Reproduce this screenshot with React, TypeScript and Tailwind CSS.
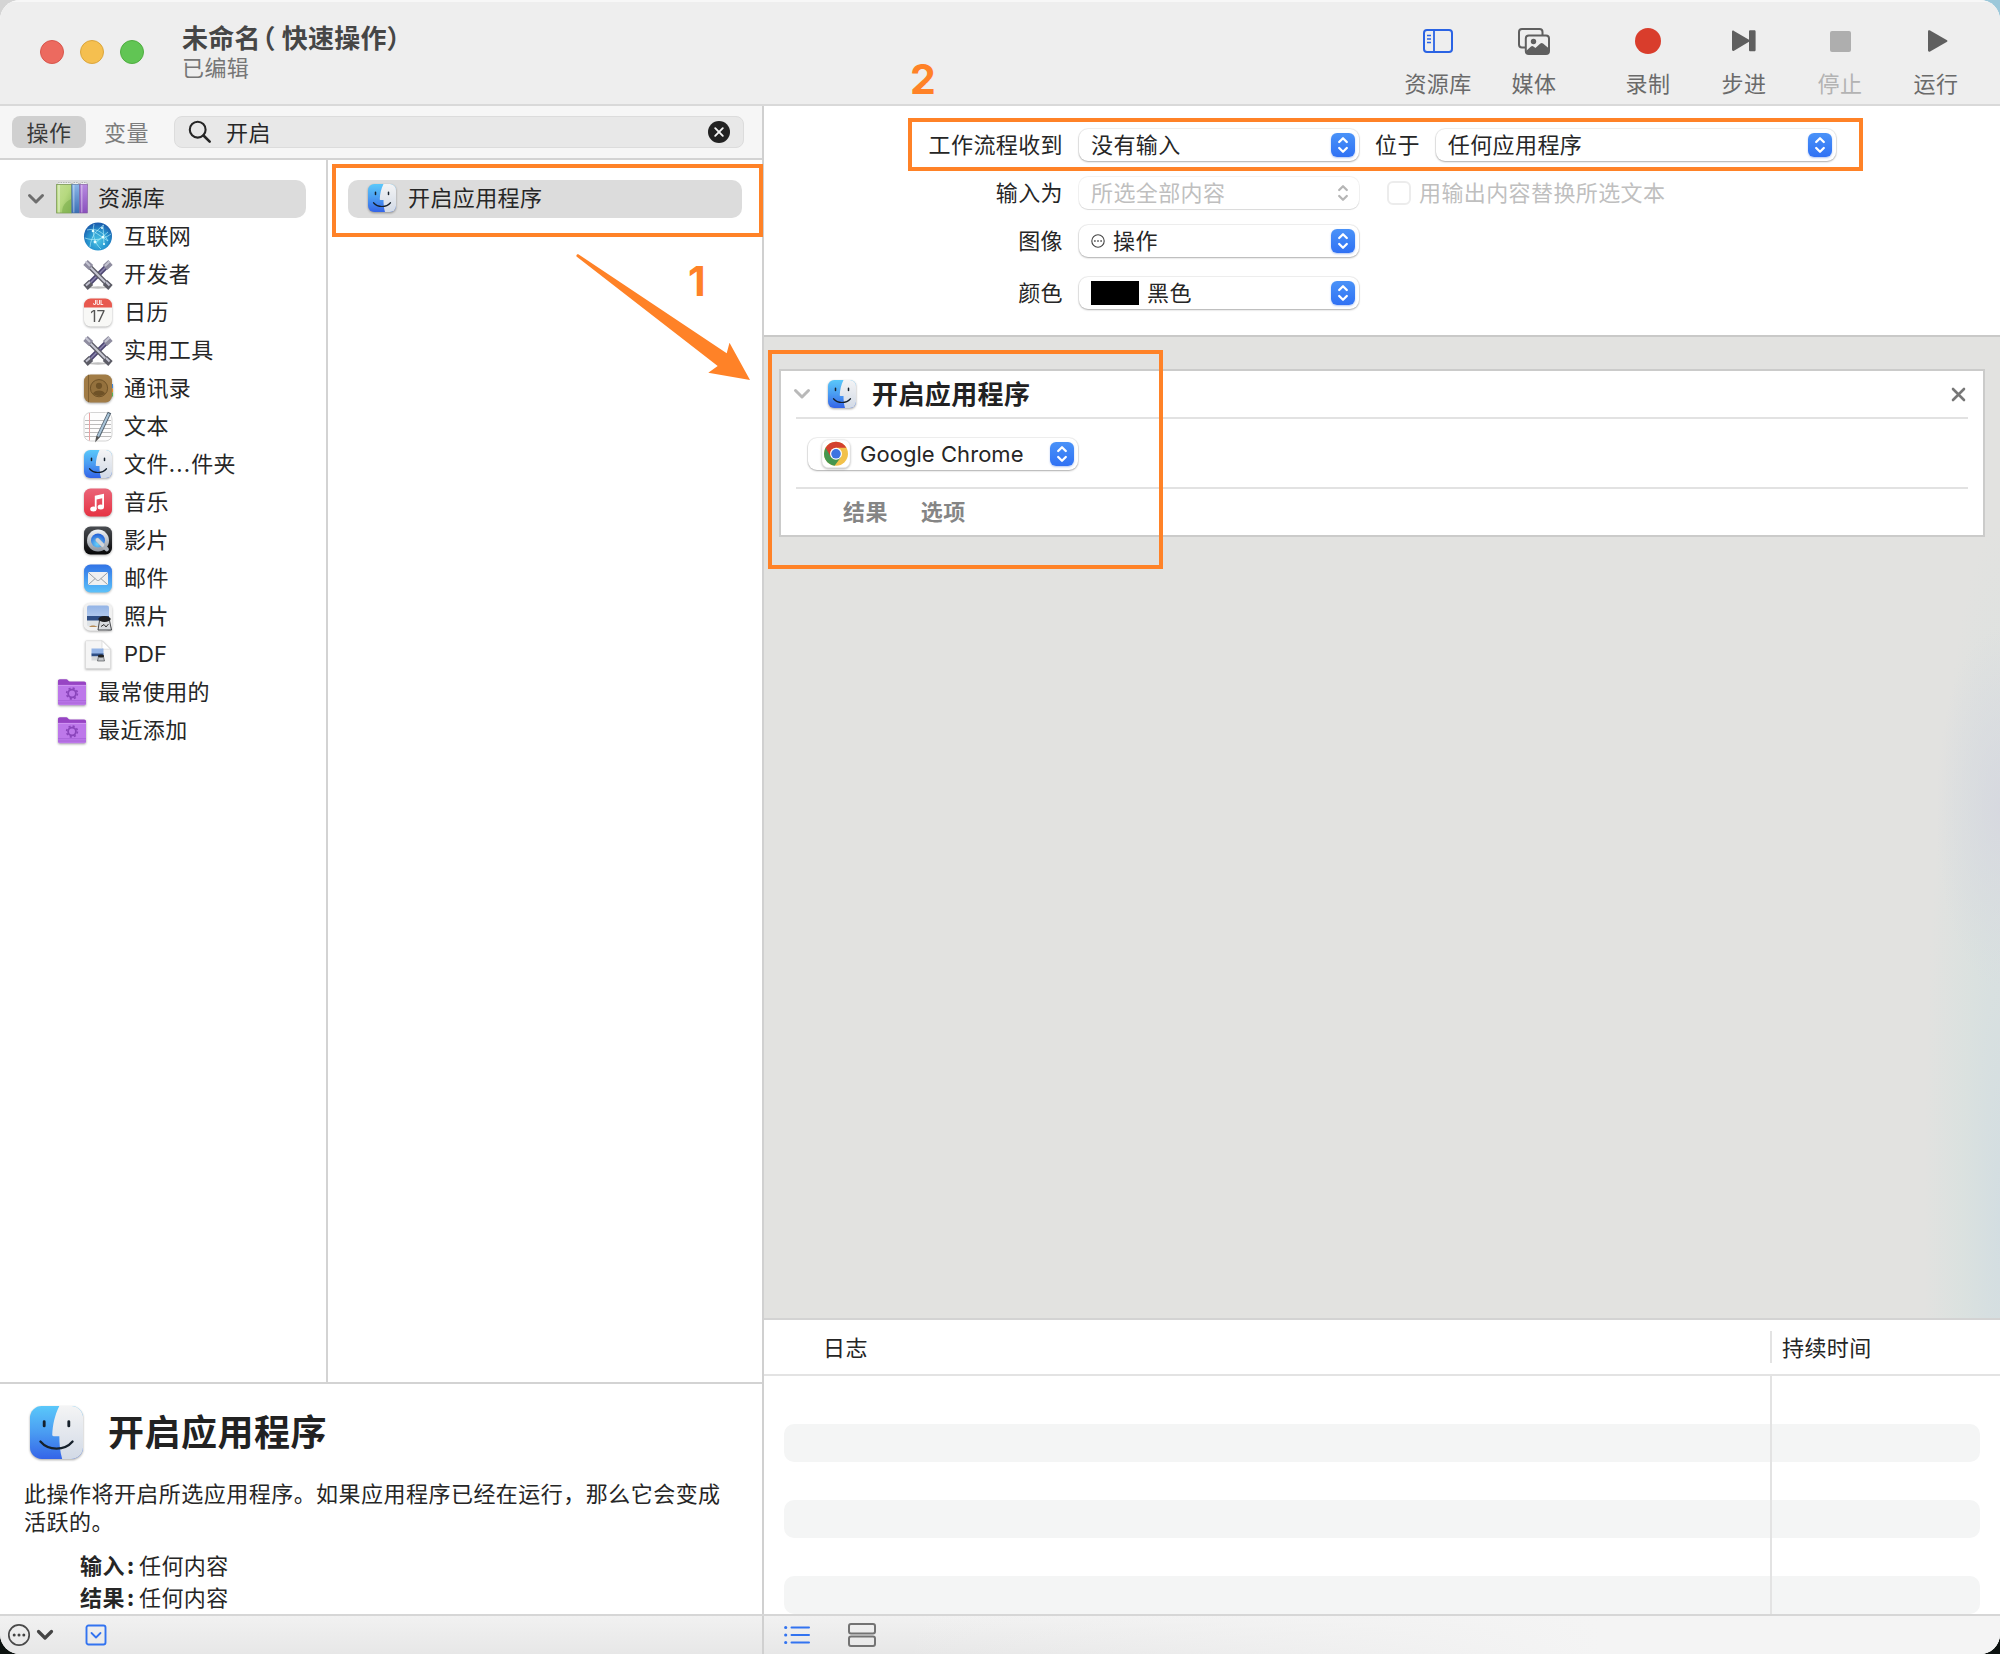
import React from "react";

const CJK = "font-['Noto_Sans_CJK_SC','Noto_Sans',sans-serif]";

/* ---------- app icons ---------- */

function Finder({ size, id }: { size: number; id: string }) {
  return (
    <svg width={size} height={size} viewBox="0 0 56 56" className="shrink-0 drop-shadow-[0_1px_1px_rgba(0,0,0,0.35)]">
      <defs>
        <linearGradient id={`${id}b`} x1="0" y1="0" x2="0" y2="1">
          <stop offset="0" stopColor="#5ac8fa" />
          <stop offset="0.5" stopColor="#4a9cf2" />
          <stop offset="1" stopColor="#3464e8" />
        </linearGradient>
        <linearGradient id={`${id}w`} x1="0" y1="0" x2="0" y2="1">
          <stop offset="0" stopColor="#f4f4f5" />
          <stop offset="1" stopColor="#d2dae6" />
        </linearGradient>
        <clipPath id={`${id}c`}>
          <rect width="56" height="56" rx="12.5" />
        </clipPath>
      </defs>
      <g clipPath={`url(#${id}c)`}>
        <rect width="56" height="56" fill={`url(#${id}b)`} />
        <path d="M31 0C26 10 24 20 23.5 30.5c0 1 .5 1.500 1.500 1.500h6c0 8 .7 16 3 24H56V0Z" fill={`url(#${id}w)`} />
      </g>
      <path d="M15 16.500v4.500M41 16.500v4.500" stroke="#15202b" strokeWidth="3" strokeLinecap="round" />
      <path d="M11 37.500c8.500 10 25.500 10 34 0" fill="none" stroke="#15202b" strokeWidth="2.400" strokeLinecap="round" />
    </svg>
  );
}

function Books() {
  return (
    <svg width="32" height="32" viewBox="0 0 32 32" className="shrink-0">
      <defs>
        <linearGradient id="bkg" x1="0" y1="0" x2="1" y2="1">
          <stop offset="0" stopColor="#c3df94" />
          <stop offset=".5" stopColor="#b6d97f" />
          <stop offset="1" stopColor="#86b559" />
        </linearGradient>
        <linearGradient id="bkb" x1="0" y1="0" x2="0" y2="1">
          <stop offset="0" stopColor="#8ab6e8" />
          <stop offset="1" stopColor="#3b6fb5" />
        </linearGradient>
        <linearGradient id="bkp" x1="0" y1="0" x2="0" y2="1">
          <stop offset="0" stopColor="#b78ae0" />
          <stop offset="1" stopColor="#8a50bd" />
        </linearGradient>
      </defs>
      <path d="M1 3 2.500.5h12L16 2.500 17.500.5H22L23.500 2.500 25 .5h5.500L32 3Z" fill="#eef0f0" stroke="#8a8f8a" strokeWidth=".6" strokeDasharray="1.500 1" />
      <rect x=".6" y="2.500" width="14.800" height="28.500" fill="url(#bkg)" stroke="#7d9a58" strokeWidth=".8" />
      <rect x="2" y="3" width="2" height="27.500" fill="#fff" opacity=".35" />
      <path d="M6 31c0-7 3-11 9-14v14Z" fill="#7fb04f" opacity=".6" />
      <rect x="15.800" y="2.500" width="7.600" height="28.500" fill="url(#bkb)" stroke="#4f719c" strokeWidth=".6" />
      <rect x="17" y="3" width="1.500" height="27.500" fill="#fff" opacity=".35" />
      <rect x="23.800" y="2.500" width="7.600" height="28.500" fill="url(#bkp)" stroke="#80559f" strokeWidth=".6" />
      <rect x="25" y="3" width="1.500" height="27.500" fill="#fff" opacity=".35" />
    </svg>
  );
}

function Globe() {
  return (
    <svg width="30" height="30" viewBox="0 0 30 30">
      <defs>
        <radialGradient id="glb" cx=".5" cy=".65" r=".6">
          <stop offset="0" stopColor="#4cc4e4" />
          <stop offset=".6" stopColor="#2795cf" />
          <stop offset="1" stopColor="#1b5fae" />
        </radialGradient>
      </defs>
      <circle cx="15" cy="14.500" r="14" fill="url(#glb)" />
      <g fill="none" stroke="#b9f3fb" strokeWidth=".9" opacity=".7">
        <path d="M4 8c8-2 16 1 21 11M11 2c-2 9 0 19 7 25M2 16c8 3 18 2 26-4M21 3c-8 5-13 12-14 22M10 9l15 10M12 21l13-11M20 3l1 20" />
      </g>
      <g fill="#e8ffff">
        <circle cx="10" cy="9" r="1.300" />
        <circle cx="20" cy="15" r="1.300" />
        <circle cx="12" cy="20" r="1.400" />
        <circle cx="19" cy="6" r="1" />
        <circle cx="21" cy="22" r="1.100" />
      </g>
    </svg>
  );
}

function Tools() {
  return (
    <svg width="30" height="30" viewBox="0 0 30 30">
      <ellipse cx="15" cy="27.500" rx="10" ry="1.200" fill="#000" opacity=".25" />
      <path d="M25 5 5 25" stroke="#4d4672" strokeWidth="4.600" />
      <path d="M25 5 5 25" stroke="#8c86ae" strokeWidth="1.600" />
      <path d="M5 5l20 20" stroke="#5d5d68" strokeWidth="4.600" />
      <path d="M5 5l20 20" stroke="#c9c9d4" strokeWidth="2" />
      <g strokeLinecap="butt">
        <path d="M2.500 2.500 8 7.500M27.500 2.500 22 7.500" stroke="#8f8da0" strokeWidth="6.500" />
        <path d="M2.500 27.500 8 22.500M27.500 27.500 22 22.500" stroke="#5c5c66" strokeWidth="6.500" />
        <path d="M2.500 1.500 7 6M26.500 1.500 22 6M3 25.500l4-3.500M26.500 25.500 23 22" stroke="#c4c4d2" strokeWidth="1.800" />
      </g>
    </svg>
  );
}

function Calendar() {
  return (
    <svg width="30" height="30" viewBox="0 0 30 30" className="drop-shadow-[0_1px_1px_rgba(0,0,0,0.3)]">
      <rect x="1" y=".5" width="28" height="28" rx="6.500" fill="#f8f8f6" />
      <path d="M1 9.500V7A6.500 6.500 0 0 1 7.500.5h15A6.500 6.500 0 0 1 29 7v2.500Z" fill="#e8594f" />
      <text x="15.300" y="7.400" fontSize="5.500" fontWeight="700" fill="#fff" textAnchor="middle" fontFamily="Inter, sans-serif" letterSpacing="0">
        JUL
      </text>
      <text x="14.800" y="23.500" fontSize="15.500" fill="#555" textAnchor="middle" fontFamily="Inter, sans-serif" letterSpacing="0">
        17
      </text>
    </svg>
  );
}

function Contacts() {
  return (
    <svg width="30" height="30" viewBox="0 0 30 30" className="drop-shadow-[0_1px_1px_rgba(0,0,0,0.35)]">
      <rect x="27" y="10" width="3" height="4.500" fill="#3f86d8" />
      <rect x="27" y="14.500" width="3" height="4" fill="#e98a2c" />
      <rect x="27" y="18.500" width="3" height="4" fill="#54b354" />
      <rect x="1" y=".5" width="28" height="28" rx="6.500" fill="#a17c46" />
      <path d="M5.500.8v27.400" stroke="#7f6033" strokeWidth="1" />
      <circle cx="16" cy="14.200" r="8.600" fill="#94713d" stroke="#6f5227" strokeWidth="1" />
      <circle cx="16" cy="11.800" r="3.100" fill="#6f5227" />
      <path d="M10 19.600c1.500-4 10.500-4 12 0-3 3.300-9 3.300-12 0Z" fill="#6f5227" />
    </svg>
  );
}

function TextEdit() {
  return (
    <svg width="30" height="32" viewBox="0 0 30 32">
      <rect x="1" y="1.500" width="28" height="28.500" rx="6.500" fill="#fdfdfd" stroke="#cfcfcf" strokeWidth=".9" />
      <path d="M2 9.500h26M2 13.500h26M2 17.500h26M2 21.500h26M2 25.500h26" stroke="#b4b4b4" strokeWidth=".9" />
      <path d="M6.500 2v27.500" stroke="#eba2a2" strokeWidth="1" />
      <path d="M26.500 1.500 15 26" stroke="#52616e" strokeWidth="3.800" />
      <path d="M26 2.500 15 25.500" stroke="#a9c4d8" strokeWidth="2" />
      <path d="m13.300 25 3.400 1.600-4.700 5Z" fill="#555" />
    </svg>
  );
}

function Music() {
  return (
    <svg width="30" height="30" viewBox="0 0 30 30" className="drop-shadow-[0_1px_1px_rgba(0,0,0,0.3)]">
      <defs>
        <linearGradient id="mus" x1="0" y1="0" x2="0" y2="1">
          <stop offset="0" stopColor="#ea6478" />
          <stop offset="1" stopColor="#e63343" />
        </linearGradient>
      </defs>
      <rect x="1" y=".5" width="28" height="28" rx="6.500" fill="url(#mus)" />
      <path d="M11.800 7.800 21 5.800v13.200h-1.800V10.200l-5.600 1.200v9.800h-1.800Z" fill="#fff" />
      <ellipse cx="10.400" cy="21.100" rx="3.200" ry="2.500" fill="#fff" />
      <ellipse cx="17.800" cy="19.100" rx="3.200" ry="2.500" fill="#fff" />
    </svg>
  );
}

function QuickTime() {
  return (
    <svg width="30" height="30" viewBox="0 0 30 30" className="drop-shadow-[0_1px_1px_rgba(0,0,0,0.3)]">
      <defs>
        <linearGradient id="qtb" x1="0" y1="0" x2="0" y2="1">
          <stop offset="0" stopColor="#4a4d52" />
          <stop offset="1" stopColor="#060607" />
        </linearGradient>
        <linearGradient id="qtr" x1="0" y1="0" x2="0" y2="1">
          <stop offset="0" stopColor="#f2f4f7" />
          <stop offset="1" stopColor="#8d949d" />
        </linearGradient>
        <radialGradient id="qtc" cx=".45" cy=".75" r=".7">
          <stop offset="0" stopColor="#69d3fb" />
          <stop offset="1" stopColor="#2563d8" />
        </radialGradient>
      </defs>
      <rect x="1" y=".5" width="28" height="28" rx="6.500" fill="url(#qtb)" />
      <circle cx="15" cy="14.500" r="11" fill="url(#qtr)" />
      <circle cx="15" cy="14.500" r="7" fill="url(#qtc)" />
      <path d="M14.500 14l9.300 9.300" stroke="#a9b0b9" strokeWidth="4.200" strokeLinecap="round" />
      <path d="M14.500 14l5 5" stroke="#cfd5dc" strokeWidth="3.600" strokeLinecap="round" />
    </svg>
  );
}

function Mail() {
  return (
    <svg width="30" height="30" viewBox="0 0 30 30" className="drop-shadow-[0_1px_1px_rgba(0,0,0,0.3)]">
      <defs>
        <linearGradient id="mal" x1="0" y1="0" x2="0" y2="1">
          <stop offset="0" stopColor="#3173e6" />
          <stop offset="1" stopColor="#5cc2fa" />
        </linearGradient>
      </defs>
      <rect x="1" y=".5" width="28" height="28" rx="6.500" fill="url(#mal)" />
      <rect x="5" y="8" width="20" height="13" rx="1.500" fill="#f0f0f0" />
      <path d="m5.500 8.700 8.300 7.400c.7.600 1.700.6 2.400 0l8.300-7.400M5.500 20.500l6.700-6M24.500 20.500l-6.700-6" fill="none" stroke="#8f959c" strokeWidth=".9" />
    </svg>
  );
}

function Preview() {
  return (
    <svg width="30" height="30" viewBox="0 0 30 30" className="drop-shadow-[0_1px_1px_rgba(0,0,0,0.3)]">
      <defs>
        <linearGradient id="prv" x1="0" y1="0" x2="0" y2="1">
          <stop offset="0" stopColor="#93b4e6" />
          <stop offset="1" stopColor="#b4cbee" />
        </linearGradient>
      </defs>
      <rect x=".7" y=".7" width="28.500" height="28" rx="6.500" fill="#f1f1f1" />
      <rect x="4" y="3.500" width="22" height="12" rx="2" fill="url(#prv)" />
      <rect x="4" y="14" width="22" height="5" fill="#2f4f86" />
      <path d="M4 18.500h22v6H6a2 2 0 0 1-2-2Z" fill="#dfe3e6" />
      <path d="M6 25c3-2.500 6-1.500 9 0Z" fill="#b58a55" />
      <path d="M16.500 18.500h10l2 9.500H15Z" fill="#d9dcdf" stroke="#34363a" strokeWidth=".9" />
      <ellipse cx="21.500" cy="17" rx="6.200" ry="3" fill="#1d1e21" />
      <path d="M18 24.500l3-2 2 2.500 2.500-3" stroke="#333" strokeWidth="1" fill="none" />
    </svg>
  );
}

function Pdf() {
  return (
    <svg width="30" height="30" viewBox="0 0 30 30" className="drop-shadow-[0_1px_1px_rgba(0,0,0,0.3)]">
      <path d="M3.500.7H19l8.500 8.500v19.300h-25V1.700a1 1 0 0 1 1-1Z" fill="#f5f5f5" stroke="#d8d8d8" strokeWidth=".6" />
      <path d="M19 .7v7a1.500 1.500 0 0 0 1.500 1.500h7Z" fill="#fff" stroke="#cfcfcf" strokeWidth=".6" />
      <rect x="8.500" y="8.500" width="12" height="6" fill="#94b4e6" />
      <rect x="8.500" y="13.500" width="12" height="3" fill="#2f4f86" />
      <rect x="8.500" y="16.500" width="12" height="4" fill="#d5d8da" />
      <path d="M15.500 16.500h5l1 4.500h-7Z" fill="#c2c5c9" stroke="#3a3c40" strokeWidth=".6" />
      <ellipse cx="18" cy="16" rx="3" ry="1.500" fill="#222" />
    </svg>
  );
}

function SmartFolder() {
  return (
    <svg width="32" height="30" viewBox="0 0 32 30" className="shrink-0 drop-shadow-[0_1px_1px_rgba(0,0,0,0.35)]">
      <path d="M2 5V3c0-1.100.7-1.800 1.800-1.800h6.400c1.600 0 2.300 2.300 3.800 2.300h14.200C29.300 3.500 30 4.200 30 5.300V9H2Z" fill="#9744c4" />
      <path d="M2 7h28v18.500c0 1-.7 1.700-1.700 1.700H3.700c-1 0-1.700-.7-1.700-1.700Z" fill="#bd78ea" />
      <path d="M2 7.400h28" stroke="#d39df5" strokeWidth=".8" />
      <path d="M2 22.700h28M2 25h28" stroke="#a35fd3" strokeWidth=".8" />
      <circle cx="16" cy="15.500" r="3.900" fill="none" stroke="#8a45bb" strokeWidth="1.800" />
      <circle cx="16" cy="15.500" r="5.400" fill="none" stroke="#8a45bb" strokeWidth="1.600" strokeDasharray="2.120 2.120" />
    </svg>
  );
}

function Chrome() {
  return (
    <svg width="30" height="30" viewBox="0 0 30 30" className="shrink-0 drop-shadow-[0_1px_1px_rgba(0,0,0,0.3)]">
      <rect x="1" y=".8" width="28" height="28" rx="6.500" fill="#fff" stroke="#e4e4e4" strokeWidth=".5" />
      <circle cx="15" cy="14.800" r="12" fill="#f2c14a" />
      <path d="M15 14.800 4.600 8.800A12 12 0 0 0 13.600 26.700L20.200 17.800Z" fill="#45964f" />
      <path d="M15 14.800 9.800 17.800 4.600 8.800a12 12 0 0 1 20.800 0H15Z" fill="#d3402f" />
      <circle cx="15" cy="14.800" r="6" fill="#fff" />
      <circle cx="15" cy="14.800" r="4.800" fill="#3c73e0" />
    </svg>
  );
}

/* ---------- controls ---------- */

function Chevron({ color, width = 3 }: { color: string; width?: number }) {
  return (
    <svg width="18" height="12" viewBox="0 0 18 12" className="shrink-0">
      <path d="m2.500 2.500 6.500 6.500 6.500-6.500" fill="none" stroke={color} strokeWidth={width} strokeLinecap="round" strokeLinejoin="round" />
    </svg>
  );
}

function Stepper({ off = false }: { off?: boolean }) {
  return (
    <span
      className={
        off
          ? "flex h-6 w-6 shrink-0 items-center justify-center"
          : "flex h-6 w-6 shrink-0 items-center justify-center rounded-[6px] bg-gradient-to-b from-[#4a92f8] to-[#3071f4] shadow-[0_1px_2px_rgba(30,90,220,0.35)]"
      }
    >
      <svg width="12" height="18" viewBox="0 0 12 18">
        <path
          d="M2.200 6 6 2.300 9.800 6M2.200 12 6 15.700 9.800 12"
          fill="none"
          stroke={off ? "#b5b5b5" : "#fff"}
          strokeWidth="2.300"
          strokeLinecap="round"
          strokeLinejoin="round"
        />
      </svg>
    </span>
  );
}

function Popup({ className, off, children }: { className: string; off?: boolean; children: React.ReactNode }) {
  const shadow = off
    ? "shadow-[0_0_0_1px_rgba(0,0,0,0.05),0_1px_1px_rgba(0,0,0,0.1)] text-[#bfbfbf]"
    : "shadow-[0_0_0_1px_rgba(0,0,0,0.06),0_1px_2px_rgba(0,0,0,0.28)] text-[#262626]";
  return (
    <div className={`flex h-8 items-center rounded-[9px] bg-white pr-1 ${shadow} ${className}`}>
      <div className="flex flex-1 items-center">{children}</div>
      <Stepper off={off} />
    </div>
  );
}

function ToolItem({ label, className, off, children }: { label: string; className: string; off?: boolean; children: React.ReactNode }) {
  return (
    <div className={`flex flex-col items-center ${className}`}>
      <div className="flex h-[30px] items-center">{children}</div>
      <div className={`mt-[14px] h-6 leading-6 whitespace-nowrap ${off ? "text-[#b3b3b3]" : "text-[#6a6a6a]"}`}>{label}</div>
    </div>
  );
}

const categories: [React.ReactNode, () => React.JSX.Element][] = [
  ["互联网", Globe],
  ["开发者", Tools],
  ["日历", Calendar],
  ["实用工具", Tools],
  ["通讯录", Contacts],
  ["文本", TextEdit],
  [
    <>
      文件<span className="font-['Inter'] tracking-[1.1px]">...</span>件夹
    </>,
    () => (
      <span className="mb-px">
        <Finder size={28} id="fs" />
      </span>
    ),
  ],
  ["音乐", Music],
  ["影片", QuickTime],
  ["邮件", Mail],
  ["照片", Preview],
  [<span className="font-['Inter'] tracking-[0px]">PDF</span>, Pdf],
];

/* ---------- regions ---------- */

function TitleBar() {
  return (
    <header className="flex h-[106px] shrink-0 border-b-2 border-[#d9d9d9] bg-[#eeeeee] shadow-[inset_0_2px_0_#f7f7f7]">
      <div className="flex gap-4 pt-10 pl-10">
        <span className="h-6 w-6 rounded-full border border-[#d8564c] bg-[#ec6a5f]" />
        <span className="h-6 w-6 rounded-full border border-[#dba63d] bg-[#f5bf4f]" />
        <span className="h-6 w-6 rounded-full border border-[#4fae40] bg-[#61c554]" />
      </div>
      <div className="ml-[38px] pt-[22px]">
        <div className="flex h-[30px] text-[26px] leading-[30px] font-bold tracking-[0.2px] whitespace-nowrap text-[#464646]">
          <span>未命名</span>
          <span className="mr-[6px] ml-[2px] [font-feature-settings:'halt']">（</span>
          <span>快速操作）</span>
        </div>
        <div className="h-7 text-[22px] leading-7 text-[#767676]">已编辑</div>
      </div>
      <div className="ml-auto flex pt-[26px] pr-4">
        <ToolItem label="资源库" className="w-24">
          <svg width="30" height="24" viewBox="0 0 30 24" fill="none" stroke="#2a63e4" strokeWidth="2">
            <rect x="1" y="1" width="28" height="22" rx="3" />
            <path d="M11 1v22" strokeWidth="1.800" />
            <path d="M4 6.500h4M4 10h4M4 13.500h4" strokeWidth="1.600" />
          </svg>
        </ToolItem>
        <ToolItem label="媒体" className="w-24">
          <svg width="32" height="27" viewBox="0 0 32 27">
            <path d="M7 19.500H4A3 3 0 0 1 1 16.500V4a3 3 0 0 1 3-3h17.500a3 3 0 0 1 3 3v3" fill="none" stroke="#5f5f5f" strokeWidth="2" />
            <rect x="7.800" y="7.500" width="23.200" height="18.500" rx="3" fill="#eeeeee" stroke="#5f5f5f" strokeWidth="2" />
            <circle cx="15.500" cy="13.500" r="2.700" fill="#5f5f5f" />
            <path d="m8 23 5-4.500c.8-.7 1.600-.7 2.400 0l2 1.500 5-4.500c.9-.8 1.700-.8 2.600 0l6 5V24a2 2 0 0 1-2 2H10a2 2 0 0 1-2-2Z" fill="#5f5f5f" />
          </svg>
        </ToolItem>
        <ToolItem label="录制" className="ml-[18px] w-24">
          <span className="h-[26px] w-[26px] rounded-full bg-[#d93d2c]" />
        </ToolItem>
        <ToolItem label="步进" className="w-24">
          <svg width="24" height="22" viewBox="0 0 24 22" fill="#5f5f5f">
            <path d="M0 2C0 .6 1 .2 2 .9L17 9.800V1.500c0-.8.500-1.300 1.300-1.300h4c.8 0 1.300.5 1.300 1.300v18.500c0 .8-.5 1.300-1.300 1.300h-4c-.8 0-1.300-.5-1.300-1.300V11.800L2 20.700c-1 .6-2 .2-2-1.100Z" />
          </svg>
        </ToolItem>
        <ToolItem label="停止" className="w-24" off>
          <span className="h-[21px] w-[21px] rounded-[2px] bg-[#aeaeae]" />
        </ToolItem>
        <ToolItem label="运行" className="w-24">
          <svg width="20" height="22" viewBox="0 0 20 22" fill="#5f5f5f" className="ml-[3px]">
            <path d="M0 1.800C0 .4 1 0 2.100.6L18.600 10c1.200.7 1.200 1.400 0 2.100L2.100 21.400C1 22 0 21.600 0 20.300Z" />
          </svg>
        </ToolItem>
      </div>
    </header>
  );
}

function LibraryPane() {
  return (
    <section className="flex w-[764px] shrink-0 flex-col border-r-2 border-[#d0d0d0]">
      <div className="flex h-[54px] shrink-0 items-center border-b-2 border-[#d3d3d3] bg-[#f6f6f6] pl-3">
        <div className="flex h-8 w-[74px] items-center justify-center rounded-[8px] bg-[#d0d0d0] pb-[2px] text-[#3a3a3a]">操作</div>
        <div className="ml-[18px] w-[70px] pb-[2px] text-[#7d7d7d]">变量</div>
        <div className="flex h-8 w-[570px] items-center rounded-[8px] border border-[#dcdcdc] bg-[#e8e8e8] pr-[13px] pl-[13px]">
          <svg width="24" height="24" viewBox="0 0 24 24" fill="none" stroke="#262626" strokeWidth="2.100" strokeLinecap="round">
            <circle cx="9.700" cy="9.700" r="7.900" />
            <path d="m15.500 15.500 6.200 6.200" strokeWidth="2.600" />
          </svg>
          <span className="ml-[14px] flex-1 pb-[2px] text-[#262626]">开启</span>
          <svg width="22" height="22" viewBox="0 0 22 22">
            <circle cx="11" cy="11" r="11" fill="#222" />
            <path d="m7.200 7.200 7.600 7.600M14.800 7.200l-7.600 7.600" stroke="#f4f4f4" strokeWidth="1.900" strokeLinecap="round" />
          </svg>
        </div>
      </div>
      <div className="flex flex-1">
        <nav className="w-[328px] shrink-0 border-r-2 border-[#d3d3d3] pt-5 pl-5">
          <div className="flex h-[38px] w-[286px] items-center rounded-[10px] bg-[#dcdcdc] pl-[7px]">
            <Chevron color="#6e6e6e" />
            <span className="-mt-[3px] ml-[11px]">
              <Books />
            </span>
            <span className="ml-[10px] pb-[5px]">资源库</span>
          </div>
          {categories.map(([name, Icon], i) => (
            <div key={i} className="flex h-[38px] items-center pl-[63px]">
              <span className="flex w-[30px] justify-center pb-px">
                <Icon />
              </span>
              <span className={i === 6 || i === 11 ? "ml-[11px] pb-[4px]" : "ml-[11px] pb-[5px]"}>{name}</span>
            </div>
          ))}
          {["最常使用的", "最近添加"].map((name) => (
            <div key={name} className="flex h-[38px] items-center pl-9">
              <SmartFolder />
              <span className="ml-[10px] pb-[5px]">{name}</span>
            </div>
          ))}
        </nav>
        <div className="flex-1 pt-5 pl-5">
          <div className="flex h-[38px] w-[394px] items-center rounded-[10px] bg-[#dcdcdc] pl-5">
            <span className="pb-[2px]">
              <Finder size={28} id="fl" />
            </span>
            <span className="ml-3 pb-[5px]">开启应用程序</span>
          </div>
        </div>
      </div>
      <div className="h-[232px] shrink-0 border-t-2 border-[#d3d3d3] pt-[22px]">
        <div className="flex h-[53px] items-center pl-[30px]">
          <Finder size={53} id="fi" />
          <h2 className="ml-[25px] pb-[5px] text-[36px] leading-[53px] font-bold tracking-[0.5px] text-[#222]">开启应用程序</h2>
        </div>
        <p className="mt-[19px] ml-6 w-[730px] leading-7 tracking-[0.47px]">
          此操作将开启所选应用程序。如果应用程序已经在运行，那么它会变成
          <br />
          活跃的。
        </p>
        <div className="mt-[14px] ml-[80px] leading-8">
          <div className="flex h-8">
            <b className="w-[45px]">输入</b>
            <b className="w-[14px] pl-[2px]">:</b>任何内容
          </div>
          <div className="flex h-8">
            <b className="w-[45px]">结果</b>
            <b className="w-[14px] pl-[2px]">:</b>任何内容
          </div>
        </div>
      </div>
    </section>
  );
}

function WorkflowSettings() {
  const label = "w-[299px] pb-[3px] text-right";
  return (
    <div className="h-[231px] shrink-0 border-b-2 border-[#c9c9c8] bg-white pt-[23px]">
      <div className="flex h-8 items-center">
        <span className={label}>工作流程收到</span>
        <Popup className="ml-4 w-[280px] pl-3">
          <span className="pb-[3px]">没有输入</span>
        </Popup>
        <span className="ml-4 pb-[3px]">位于</span>
        <Popup className="ml-4 w-[400px] pl-3">
          <span className="pb-[3px]">任何应用程序</span>
        </Popup>
      </div>
      <div className="mt-4 flex h-8 items-center">
        <span className={label}>输入为</span>
        <Popup className="ml-4 w-[280px] pl-3" off>
          <span className="pb-[3px]">所选全部内容</span>
        </Popup>
        <span className="ml-7 h-6 w-6 rounded-[6px] border-2 border-[#ececec] bg-white" />
        <span className="ml-2 pb-[3px] text-[#bfbfbf]">用输出内容替换所选文本</span>
      </div>
      <div className="mt-4 flex h-8 items-center">
        <span className={label}>图像</span>
        <Popup className="ml-4 w-[280px] pl-3">
          <svg width="14" height="14" viewBox="0 0 14 14" className="mr-2">
            <circle cx="7" cy="7" r="6.200" fill="none" stroke="#444" strokeWidth="1.100" />
            <path d="M3.200 7h1.400M6.300 7h1.400M9.400 7h1.400" stroke="#333" strokeWidth="1.400" />
          </svg>
          <span className="pb-[3px]">操作</span>
        </Popup>
      </div>
      <div className="mt-5 flex h-8 items-center">
        <span className={label}>颜色</span>
        <Popup className="ml-4 w-[280px] pl-3">
          <span className="mr-2 h-6 w-12 bg-black" />
          <span className="pb-[3px]">黑色</span>
        </Popup>
      </div>
    </div>
  );
}

function ActionCard() {
  return (
    <article className="mt-8 ml-[15px] h-[168px] w-[1206px] border-2 border-[#cbcbca] bg-white px-[15px] text-[#222]">
      <div className="flex h-[48px] items-center border-b-2 border-[#e2e2e2]">
        <span className="-ml-[3px]">
          <Chevron color="#b9b9b9" />
        </span>
        <span className="ml-[17px] pb-px">
          <Finder size={28} id="fc" />
        </span>
        <span className="ml-4 flex-1 pb-[3px] text-[26px] font-bold tracking-[0.4px]">开启应用程序</span>
        <svg width="15" height="15" viewBox="0 0 15 15" className="mr-[2px]">
          <path d="m2 2 11 11M13 2 2 13" stroke="#777" strokeWidth="2.600" strokeLinecap="round" />
        </svg>
      </div>
      <div className="flex h-[70px] items-center border-b-2 border-[#e2e2e2] pt-[2px] pl-3">
        <Popup className="w-[270px] pl-[13px]">
          <Chrome />
          <span className="ml-[9px] font-['Inter'] text-[22px] tracking-[0.05px]">Google Chrome</span>
        </Popup>
      </div>
      <div className="flex h-[46px] items-center gap-[33px] pb-[3px] pl-[47px] font-bold text-[#858585]">
        <span>结果</span>
        <span>选项</span>
      </div>
    </article>
  );
}

function LogPane() {
  return (
    <div className="flex h-[296px] shrink-0 flex-col border-t-2 border-[#d3d3d3] bg-white">
      <div className="flex h-[56px] shrink-0 items-center border-b-2 border-[#e3e3e3] pl-[59px]">
        <span className="w-[947px] pb-px">日志</span>
        <span className="h-8 w-[2px] bg-[#e3e3e3]" />
        <span className="ml-[10px] pb-px">持续时间</span>
      </div>
      <div className="flex flex-1">
        <div className="w-[1008px] border-r-2 border-[#e3e3e3] pt-12 pl-5">
          {[0, 1, 2].map((i) => (
            <div key={i} className="mb-[38px] h-[38px] rounded-l-[10px] bg-[#f4f5f5]" />
          ))}
        </div>
        <div className="w-[208px] pt-12">
          {[0, 1, 2].map((i) => (
            <div key={i} className="mb-[38px] h-[38px] rounded-r-[10px] bg-[#f4f5f5]" />
          ))}
        </div>
      </div>
    </div>
  );
}

function StatusBar() {
  return (
    <footer className="flex h-10 shrink-0 border-t-2 border-[#d6d6d6] bg-[linear-gradient(90deg,rgba(244,244,244,0)_45%,#f4f4f4_80%),linear-gradient(180deg,#f1f1f1,#e7e7e7)]">
      <div className="flex w-[764px] items-center border-r-2 border-[#d0d0d0] pl-[7px]">
        <svg width="24" height="24" viewBox="0 0 24 24">
          <circle cx="12" cy="12" r="10.200" fill="none" stroke="#4a4a4a" strokeWidth="1.700" />
          <circle cx="7.200" cy="12" r="1.500" fill="#444" />
          <circle cx="12" cy="12" r="1.500" fill="#444" />
          <circle cx="16.800" cy="12" r="1.500" fill="#444" />
        </svg>
        <span className="ml-[5px]">
          <Chevron color="#444" width={3.2} />
        </span>
        <svg width="22" height="22" viewBox="0 0 22 22" fill="none" stroke="#3273f0" className="ml-[31px]">
          <rect x="1.500" y="1.500" width="19" height="19" rx="2" strokeWidth="1.900" />
          <path d="m6.500 9 4.500 4.500L15.500 9" strokeWidth="1.800" strokeLinecap="round" strokeLinejoin="round" />
        </svg>
      </div>
      <div className="flex items-center pl-5">
        <svg width="27" height="20" viewBox="0 0 27 20" stroke="#3273f0" strokeLinecap="round">
          <path d="M7.500 2.500h17.500M7.500 10h17.500M7.500 17.500h17.500" strokeWidth="2" />
          <path d="M1.700 2.500h.01M1.700 10h.01M1.700 17.500h.01" strokeWidth="3.200" />
        </svg>
        <svg width="28" height="24" viewBox="0 0 28 24" fill="none" stroke="#737373" strokeWidth="2" className="ml-[37px]">
          <rect x="1" y="1" width="26" height="9.600" rx="2" />
          <rect x="1" y="13.400" width="26" height="9.600" rx="2" />
        </svg>
      </div>
    </footer>
  );
}

/* Orange callouts drawn on top of the window. */
function Callouts() {
  return (
    <>
      <div className="absolute top-[164px] left-[332px] h-[73px] w-[431px] border-4 border-[#ff8227]" />
      <div className="absolute top-[118px] left-[908px] h-[53px] w-[955px] border-4 border-[#ff8227]" />
      <div className="absolute top-[350px] left-[768px] h-[219px] w-[395px] border-4 border-[#ff8227]" />
      <svg className="absolute top-[250px] left-[570px]" width="190" height="136" viewBox="570 250 190 136">
        <path d="M576.500 256.500c-.6-1.300.8-2.700 2.200-1.900L726.700 353.300 729.500 342.700 750 380 708.300 372.700 717.700 366Z" fill="#ff8227" />
      </svg>
      <div className="absolute top-[257px] left-[688px] font-['Inter'] text-[41px] leading-[48px] font-bold text-[#ff8227]">1</div>
      <div className="absolute top-[55px] left-[910px] font-['Inter'] text-[41px] leading-[48px] font-bold text-[#ff8227]">2</div>
    </>
  );
}

export default function App() {
  return (
    <div className={`relative h-[1654px] w-[2000px] overflow-hidden bg-[#d4d4d4] ${CJK}`}>
      <div className="absolute bottom-0 left-0 h-10 w-[2000px] bg-[#0c1210]" />
      <div className="absolute top-0 right-0 h-10 w-10 bg-[#9cc8da]" />
      <div className="relative flex h-[1654px] w-[2000px] flex-col overflow-hidden rounded-[20px] bg-white text-[22px] tracking-[0.4px] text-[#262626]">
        <TitleBar />
        <div className="flex h-[1508px] shrink-0">
          <LibraryPane />
          <section className="flex w-[1236px] flex-col">
            <WorkflowSettings />
            <div className="flex-1 bg-[#e2e2e0] bg-[radial-gradient(ellipse_64px_180px_at_100%_48%,rgba(214,216,223,0.95),rgba(214,216,223,0)),radial-gradient(ellipse_76px_700px_at_100%_90%,rgba(210,221,225,0.95),rgba(216,225,223,0.75)_50%,rgba(226,226,224,0))]">
              <ActionCard />
            </div>
            <LogPane />
          </section>
        </div>
        <StatusBar />
      </div>
      <Callouts />
    </div>
  );
}
